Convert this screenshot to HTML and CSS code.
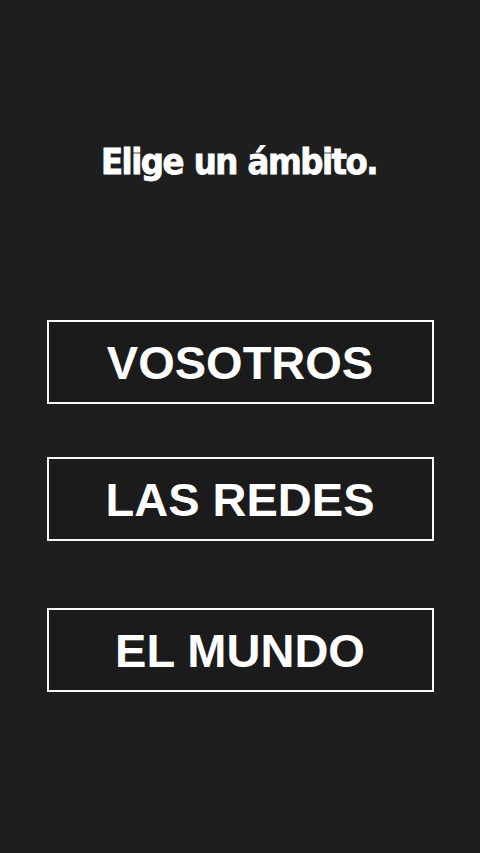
FILE: index.html
```html
<!DOCTYPE html>
<html lang="es">
<head>
<meta charset="utf-8">
<link rel="stylesheet" href="styles.css">
</head>
<body>
<main class="screen">
  <h1 class="title">Elige un ámbito.</h1>
  <nav class="choices">
    <button class="choice choice-1">VOSOTROS</button>
    <button class="choice choice-2">LAS REDES</button>
    <button class="choice choice-3">EL MUNDO</button>
  </nav>
</main>
</body>
</html>
```
FILE: styles.css
```css
html, body {
  margin: 0;
  padding: 0;
  background: #1e1e1e;
}
.screen {
  width: 480px;
  height: 853px;
  display: flex;
  flex-direction: column;
  align-items: center;
  box-sizing: border-box;
  padding-top: 137px;
}
.title {
  margin: 0 0 0 -2px;
  font-family: "DejaVu Sans Condensed", "DejaVu Sans", sans-serif;
  font-stretch: semi-condensed;
  font-weight: bold;
  font-size: 36px;
  line-height: 50px;
  color: #ffffff;
  letter-spacing: -1.5px;
  word-spacing: 1px;
  -webkit-text-stroke: 0.8px #ffffff;
}
.choices {
  display: flex;
  flex-direction: column;
  width: 387px;
  margin-top: 133px;
}
.choice {
  box-sizing: border-box;
  height: 84px;
  border: 2px solid #f8f8f8;
  background: #1b1b1b;
  color: #ffffff;
  font-family: "Liberation Sans", Arial, sans-serif;
  font-weight: bold;
  font-size: 47px;
  padding: 0;
  margin: 0;
}
.choice-2 { margin-top: 53px; }
.choice-3 { margin-top: 67px; }
```
